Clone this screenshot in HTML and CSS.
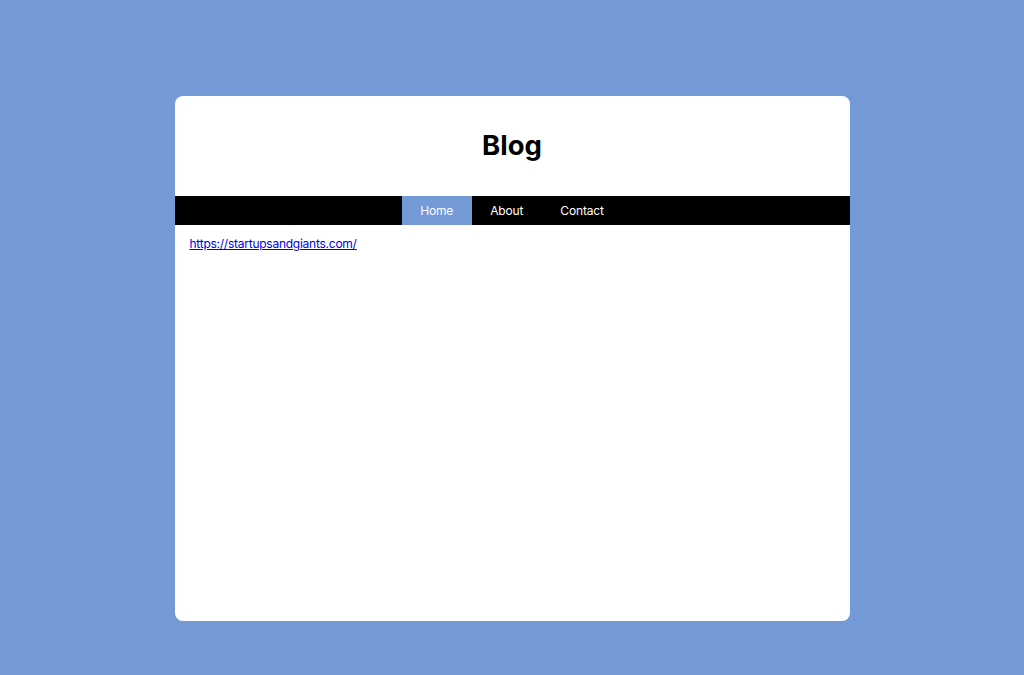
FILE: index.html
```html
<!DOCTYPE html>
<html lang="en">
<head>
<meta charset="utf-8">
<title>Blog</title>
<link rel="stylesheet" href="styles.css">
</head>
<body>
<div class="card">
  <header class="header">
    <h1 class="title">Blog</h1>
  </header>
  <nav class="nav">
    <a class="nav-item active" href="#">Home</a>
    <a class="nav-item" href="#">About</a>
    <a class="nav-item" href="#">Contact</a>
  </nav>
  <main class="content">
    <a class="link" href="https://startupsandgiants.com/">https://startupsandgiants.com/</a>
  </main>
</div>
</body>
</html>
```
FILE: styles.css
```css
html, body {
  margin: 0;
  padding: 0;
}
body {
  background: #7399d6;
  font-family: Inter, "Noto Sans", "Liberation Sans", sans-serif;
  min-height: 675px;
  padding-top: 96px;
  box-sizing: border-box;
}
.card {
  width: 675px;
  height: 525px;
  margin: 0 auto;
  background: #ffffff;
  border-radius: 8px;
  overflow: hidden;
  display: flex;
  flex-direction: column;
}
.header {
  height: 100px;
  display: flex;
  align-items: center;
  justify-content: center;
}
.title {
  margin: 0;
  font-size: 27.5px;
  font-weight: 700;
  color: #000;
  padding-bottom: 2px;
}
.nav {
  height: 29px;
  background: #000;
  display: flex;
  justify-content: center;
}
.nav-item {
  display: block;
  padding: 0 18.5px;
  line-height: 29px;
  font-size: 12px;
  letter-spacing: -0.15px;
  color: #fff;
  text-decoration: none;
}
.nav-item.active {
  background: #7399d6;
}
.content {
  padding: 11px 15px;
  font-size: 12px;
  line-height: 16px;
}
.link {
  color: #0000ee;
  letter-spacing: -0.25px;
}
```
